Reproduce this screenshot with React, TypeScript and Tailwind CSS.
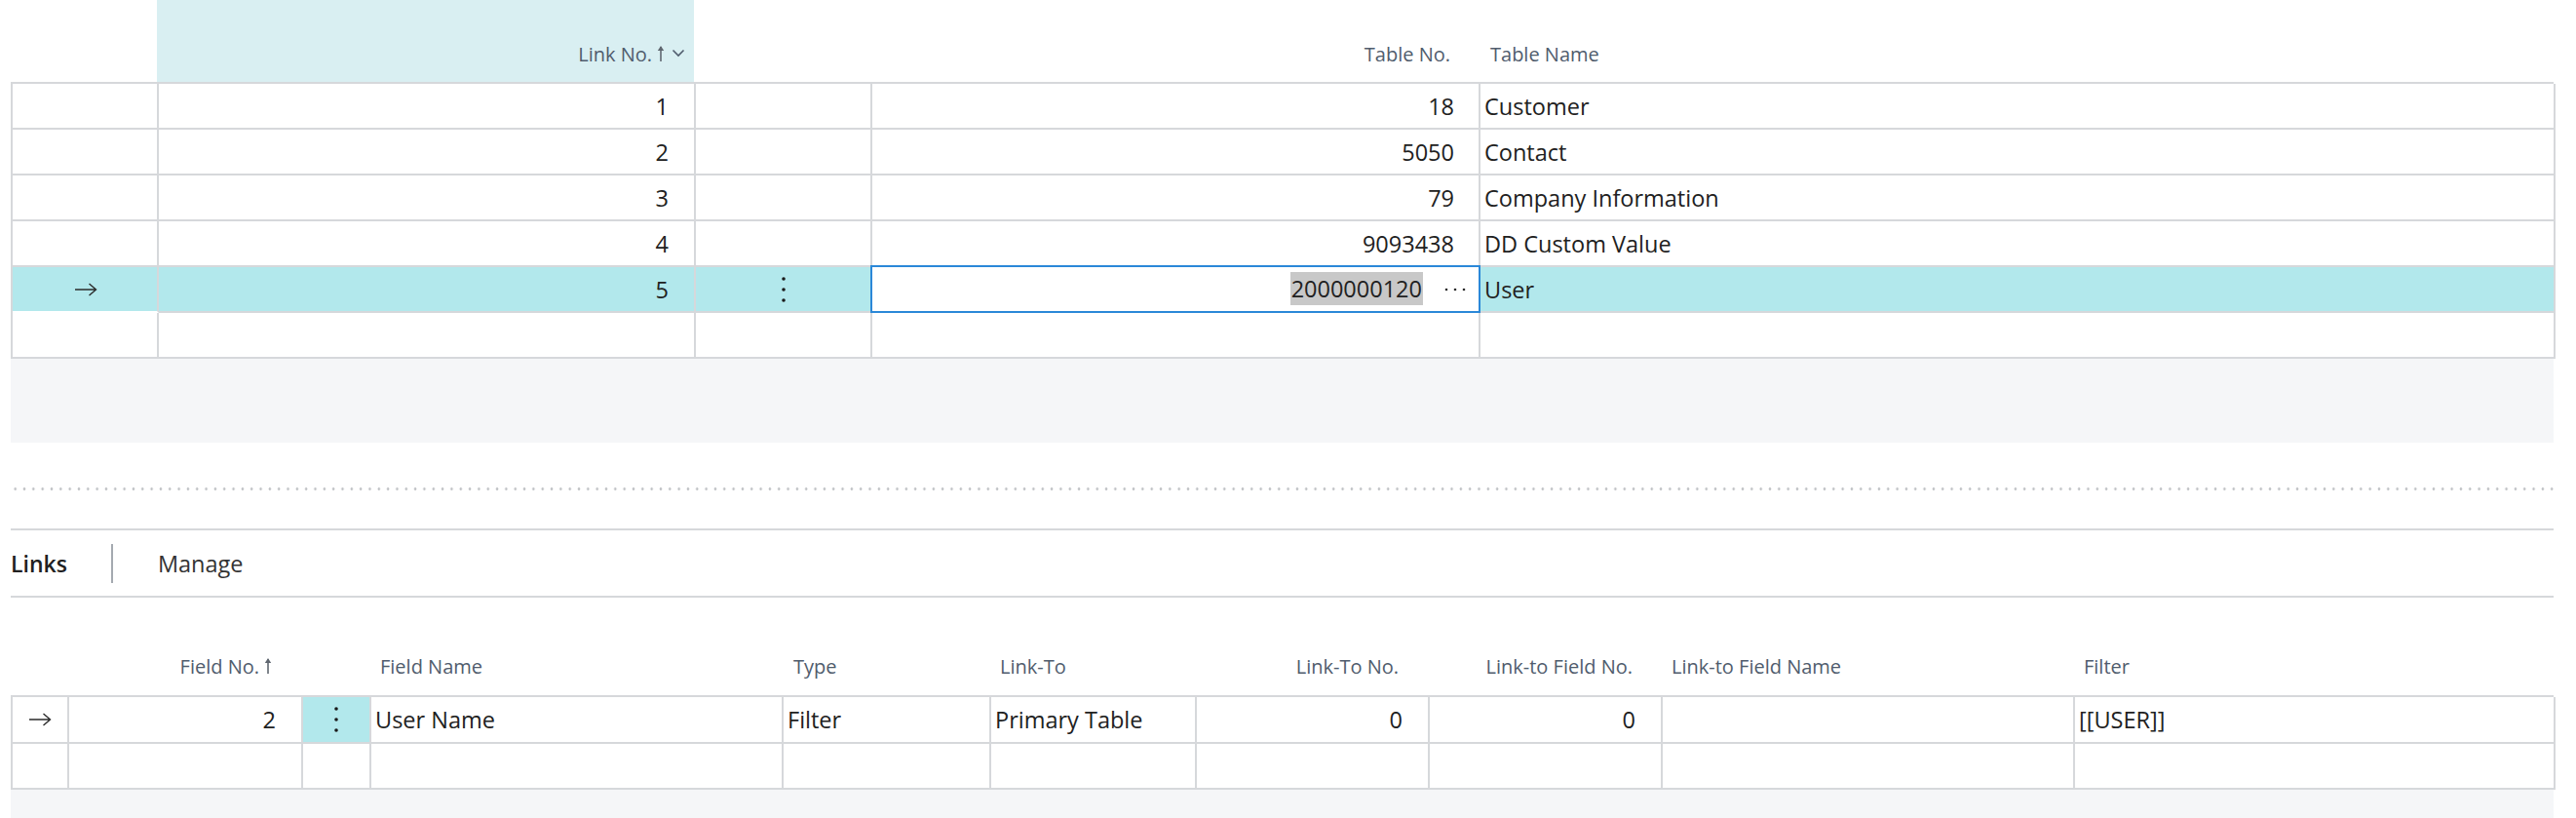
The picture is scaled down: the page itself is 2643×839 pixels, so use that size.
import React from "react";

const HEAD = "text-[20px] text-[#505c6d] leading-[28px] whitespace-nowrap";
const DATA = "text-[23.5px] text-[#212121] leading-[32px] whitespace-nowrap";
const SEL = "bg-[#b2e8ec]";

function RightArrow() {
  return (
    <svg width="24" height="14" viewBox="0 0 24 14" fill="none">
      <path d="M1 7H22.5M15.5 1L22.5 7L15.5 13" stroke="#2b2b2b" strokeWidth="1.4" />
    </svg>
  );
}

function VDots() {
  return (
    <svg width="6" height="28" viewBox="0 0 6 28">
      <circle cx="3" cy="3" r="1.8" fill="#1a1a1a" />
      <circle cx="3" cy="14" r="1.8" fill="#1a1a1a" />
      <circle cx="3" cy="25" r="1.8" fill="#1a1a1a" />
    </svg>
  );
}

function HDots() {
  return (
    <svg width="22" height="4" viewBox="0 0 22 4">
      <circle cx="2" cy="2" r="1.3" fill="#2b2b2b" />
      <circle cx="11" cy="2" r="1.3" fill="#2b2b2b" />
      <circle cx="20" cy="2" r="1.3" fill="#2b2b2b" />
    </svg>
  );
}

function UpArrow() {
  return (
    <svg width="8" height="18" viewBox="0 0 8 18" className="ml-[5px]">
      <path d="M4 2V17" stroke="#606770" strokeWidth="1.6" />
      <path d="M0.8 6L4 1L7.2 6Z" fill="#606770" />
    </svg>
  );
}

function Chevron() {
  return (
    <svg width="14" height="9" viewBox="0 0 14 9" className="ml-[7px]" fill="none">
      <path d="M1.5 1.5L7 7L12.5 1.5" stroke="#505c6d" strokeWidth="1.6" />
    </svg>
  );
}

const topCols = "grid grid-cols-[150px_551px_181px_624px_1103px]";
const botCols = "grid grid-cols-[58px_240px_70px_423px_213px_211px_239px_239px_423px_493px]";

const topRows = [
  { link: "1", no: "18", name: "Customer" },
  { link: "2", no: "5050", name: "Contact" },
  { link: "3", no: "79", name: "Company Information" },
  { link: "4", no: "9093438", name: "DD Custom Value" },
];

const cell = "h-[47px] border-r-2 border-b-2 border-[#d6d8db] flex items-center";

export default function App() {
  return (
    <div
      className="w-[2643px] h-[839px] bg-white overflow-hidden pl-[11px] pr-[23px]"
      style={{ fontFamily: '"Open Sans", "Noto Sans", sans-serif' }}
    >
      {/* Top table header */}
      <div className={`${topCols} h-[84px]`}>
        <div />
        <div className="bg-[#d9eff2] flex items-end justify-end pr-[9px] pb-[14px]">
          <span className={HEAD}>Link No.</span>
          <span className="mb-[6px] flex items-end">
            <UpArrow />
          </span>
          <span className="mb-[11px]">
            <Chevron />
          </span>
        </div>
        <div />
        <div className="flex items-end justify-end pr-[29px] pb-[14px]">
          <span className={HEAD}>Table No.</span>
        </div>
        <div className="flex items-end pl-[12px] pb-[14px]">
          <span className={HEAD}>Table Name</span>
        </div>
      </div>

      {/* Top table body */}
      <div className="border-t-2 border-l-2 border-[#d6d8db]">
        {topRows.map((r) => (
          <div key={r.link} className={topCols}>
            <div className={cell} />
            <div className={`${cell} justify-end pr-[26px]`}>
              <span className={DATA}>{r.link}</span>
            </div>
            <div className={cell} />
            <div className={`${cell} justify-end pr-[25px]`}>
              <span className={DATA}>{r.no}</span>
            </div>
            <div className={`${cell} pl-[4px]`}>
              <span className={DATA}>{r.name}</span>
            </div>
          </div>
        ))}
        {/* selected row */}
        <div className={topCols}>
          <div className={`${cell} ${SEL} justify-center border-b-white pl-[1px]`}>
            <RightArrow />
          </div>
          <div className={`${cell} ${SEL} justify-end pr-[26px]`}>
            <span className={DATA}>5</span>
          </div>
          <div className={`${cell} ${SEL} justify-center`}>
            <VDots />
          </div>
          <div className={`${cell} bg-white border-r-[#2b88d8] border-b-[#2b88d8] shadow-[inset_2px_2px_0_0_#2b88d8] justify-end pr-[13px] -mt-[2px] h-[49px] -ml-[2px]`}>
            <span className={`${DATA} bg-[#c8c8c8] leading-[34px] px-[1px]`}>2000000120</span>
            <span className="ml-[22px] mt-[2px] flex">
              <HDots />
            </span>
          </div>
          <div className={`${cell} ${SEL} pl-[4px]`}>
            <span className={DATA}>User</span>
          </div>
        </div>
        <div className={topCols}>
          <div className={cell} />
          <div className={cell} />
          <div className={cell} />
          <div className={cell} />
          <div className={cell} />
        </div>
      </div>

      {/* gray filler */}
      <div className="h-[86px] bg-[#f5f6f8]" />

      {/* dotted splitter */}
      <div className="mt-[46px] h-[3px] bg-[radial-gradient(circle,#c4c6c9_1.1px,transparent_1.6px)] bg-[length:9.33px_3px] bg-repeat-x" />

      {/* tabs bar */}
      <div className="mt-[39px] border-t-2 border-b-2 border-[#d6d8db] h-[71px] flex items-center">
        <span className="text-[23px] font-semibold text-[#212121] leading-[32px]">Links</span>
        <span className="ml-[45px] w-[2px] h-[40px] bg-[#a4a9b0]" />
        <span className="ml-[46px] text-[23.5px] text-[#333333] leading-[32px]">Manage</span>
      </div>

      {/* bottom table header */}
      <div className={`${botCols} h-[100px]`}>
        <div />
        <div className="flex items-end justify-end pr-[30px] pb-[15px]">
          <span className={HEAD}>Field No.</span>
          <span className="mb-[6px] flex">
            <UpArrow />
          </span>
        </div>
        <div />
        <div className="flex items-end pl-[11px] pb-[15px]">
          <span className={HEAD}>Field Name</span>
        </div>
        <div className="flex items-end pl-[12px] pb-[15px]">
          <span className={HEAD}>Type</span>
        </div>
        <div className="flex items-end pl-[11px] pb-[15px]">
          <span className={HEAD}>Link-To</span>
        </div>
        <div className="flex items-end justify-end pr-[30px] pb-[15px]">
          <span className={HEAD}>Link-To No.</span>
        </div>
        <div className="flex items-end justify-end pr-[29px] pb-[15px]">
          <span className={HEAD}>Link-to Field No.</span>
        </div>
        <div className="flex items-end pl-[11px] pb-[15px]">
          <span className={HEAD}>Link-to Field Name</span>
        </div>
        <div className="flex items-end pl-[11px] pb-[15px]">
          <span className={HEAD}>Filter</span>
        </div>
      </div>

      {/* bottom table body */}
      <div className="border-t-2 border-l-2 border-[#d6d8db]">
        <div className={botCols}>
          <div className={`${cell} h-[48px] justify-center`}>
            <RightArrow />
          </div>
          <div className={`${cell} h-[48px] justify-end pr-[26px]`}>
            <span className={DATA}>2</span>
          </div>
          <div className={`${cell} h-[48px] ${SEL} justify-center`}>
            <VDots />
          </div>
          <div className={`${cell} h-[48px] pl-[4px]`}>
            <span className={DATA}>User Name</span>
          </div>
          <div className={`${cell} h-[48px] pl-[4px]`}>
            <span className={DATA}>Filter</span>
          </div>
          <div className={`${cell} h-[48px] pl-[4px]`}>
            <span className={DATA}>Primary Table</span>
          </div>
          <div className={`${cell} h-[48px] justify-end pr-[26px]`}>
            <span className={DATA}>0</span>
          </div>
          <div className={`${cell} h-[48px] justify-end pr-[26px]`}>
            <span className={DATA}>0</span>
          </div>
          <div className={`${cell} h-[48px]`} />
          <div className={`${cell} h-[48px] pl-[4px]`}>
            <span className={DATA}>[[USER]]</span>
          </div>
        </div>
        <div className={botCols}>
          {Array.from({ length: 10 }).map((_, i) => (
            <div key={i} className={`${cell} h-[46px]`} />
          ))}
        </div>
      </div>
      <div className="h-[40px] bg-[#f5f6f8]" />
    </div>
  );
}
